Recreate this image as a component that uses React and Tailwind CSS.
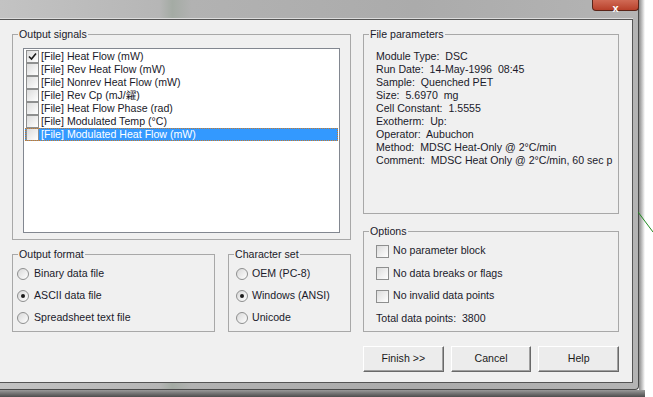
import React from 'react';

const font = { fontFamily: '"Liberation Sans", "Noto Sans CJK SC", sans-serif' };

const signals = [
  { label: '[File] Heat Flow (mW)', checked: true },
  { label: '[File] Rev Heat Flow (mW)' },
  { label: '[File] Nonrev Heat Flow (mW)' },
  { label: '[File] Rev Cp (mJ/糴)' },
  { label: '[File] Heat Flow Phase (rad)' },
  { label: '[File] Modulated Temp (°C)' },
  { label: '[File] Modulated Heat Flow (mW)', selected: true },
];

const params = [
  'Module Type:  DSC',
  'Run Date:  14-May-1996  08:45',
  'Sample:  Quenched PET',
  'Size:  5.6970  mg',
  'Cell Constant:  1.5555',
  'Exotherm:  Up:',
  'Operator:  Aubuchon',
  'Method:  MDSC Heat-Only @ 2°C/min',
  'Comment:  MDSC Heat Only @ 2°C/min, 60 sec p',
];

const CheckBox = ({ checked }) => (
  <span className="flex h-[13px] w-[13px] shrink-0 items-center justify-center border border-[#8e8f8f] bg-gradient-to-br from-[#dcdcdc] to-white">
    {checked && (
      <svg width="9" height="9" viewBox="0 0 9 9">
        <path d="M1 4.5 L3.5 7 L8 1.5" fill="none" stroke="#1a1a1a" strokeWidth="1.6" />
      </svg>
    )}
  </span>
);

const Radio = ({ checked }) => (
  <span className="flex h-[12px] w-[12px] shrink-0 items-center justify-center rounded-full border border-[#8e8f8f] bg-gradient-to-br from-[#d8d8d8] to-white">
    {checked && <span className="h-[4px] w-[4px] rounded-full bg-[#1a1a1a]" />}
  </span>
);

const Group = ({ title, className, children }) => (
  <div className={`relative border border-[#a8a8a8] ${className}`}>
    <span className="absolute -top-[7px] left-[5px] bg-[#f0f0f0] px-[1px] leading-[13px]">{title}</span>
    {children}
  </div>
);

const Button = ({ children }) => (
  <button className="flex h-[26px] w-[81px] items-center justify-center border border-t-white border-l-white border-r-[#696969] border-b-[#696969] bg-[#ececec] shadow-[inset_-1px_-1px_0_#a0a0a0] text-[10.6px] text-[#1a1a1a]">
    {children}
  </button>
);

export default function App() {
  return (
    <div className="relative flex h-[397px] w-[653px] flex-col overflow-hidden bg-white text-[10.6px] text-[#1a1a2a]" style={font}>
      <div className="flex h-[390px]">
        {/* window */}
        <div className="flex w-[639px] flex-col rounded-br-[4px] border-r border-b border-[#4a4a4a] bg-[linear-gradient(to_right,#c3c3c3,#b6b6b6_25%,#a4aba4_27%,#b2b2b2_30%,#ababab_65%,#b4b4b4)] pr-[5px] pb-[6px]">
          {/* caption */}
          <div className="flex h-[19px] justify-end border-b border-[#dcdcdc]">
            <div className="-mr-[6px] flex h-[11px] w-[47px] items-end justify-center rounded-b-[4px] border border-t-0 border-[#5a2418] bg-gradient-to-b from-[#d06a55] to-[#b8402a]">
              <span className="-mb-[3px] text-[11px] font-bold leading-[10px] text-white">x</span>
            </div>
          </div>

          {/* client area */}
          <div className="flex flex-1 border-t border-r border-b border-[#555] bg-[#f0f0f0] pt-[14px] pl-[12px]">
            {/* left column */}
            <div className="flex w-[339px] flex-col">
              <Group title="Output signals" className="h-[206px] pt-[13px] pr-[10px] pb-[6px] pl-[10px]">
                <div className="h-full border border-[#828790] bg-white p-[1px]">
                  {signals.map((s) => (
                    <div
                      key={s.label}
                      className={`flex h-[13px] items-center gap-[2px] pl-[1px] leading-[13px] whitespace-nowrap ${
                        s.selected ? 'bg-[#3399ff] text-white outline outline-1 -outline-offset-1 outline-dotted outline-[#c87a2a]' : ''
                      }`}
                    >
                      <CheckBox checked={s.checked} />
                      <span>{s.label}</span>
                    </div>
                  ))}
                </div>
              </Group>

              <div className="mt-[14px] flex gap-[13px]">
                <Group title="Output format" className="h-[78px] w-[203px] pt-[8px] pl-[4px]">
                  {[
                    ['Binary data file', false],
                    ['ASCII data file', true],
                    ['Spreadsheet text file', false],
                  ].map(([t, c]) => (
                    <div key={t} className="flex h-[22px] items-center gap-[5px]">
                      <Radio checked={c} />
                      <span>{t}</span>
                    </div>
                  ))}
                </Group>
                <Group title="Character set" className="h-[78px] w-[123px] pt-[8px] pl-[7px]">
                  {[
                    ['OEM (PC-8)', false],
                    ['Windows (ANSI)', true],
                    ['Unicode', false],
                  ].map(([t, c]) => (
                    <div key={t} className="flex h-[22px] items-center gap-[4px]">
                      <Radio checked={c} />
                      <span>{t}</span>
                    </div>
                  ))}
                </Group>
              </div>
            </div>

            {/* right column */}
            <div className="ml-[12px] flex w-[256px] flex-col">
              <Group title="File parameters" className="h-[180px] pt-[15px] pl-[12px]">
                {params.map((p) => (
                  <div key={p} className="h-[13px] leading-[13px] whitespace-pre">{p}</div>
                ))}
              </Group>

              <Group title="Options" className="mt-[17px] h-[101px] pt-[8px] pl-[12px]">
                {['No parameter block', 'No data breaks or flags', 'No invalid data points'].map((t) => (
                  <div key={t} className="flex h-[22.5px] items-center gap-[4px]">
                    <CheckBox />
                    <span>{t}</span>
                  </div>
                ))}
                <div className="flex h-[22px] items-center whitespace-pre">Total data points:  3800</div>
              </Group>

              <div className="mt-[14px] flex gap-[7px]">
                <Button>Finish &gt;&gt;</Button>
                <Button>Cancel</Button>
                <Button>Help</Button>
              </div>
            </div>
          </div>
        </div>

        {/* shadow to the right */}
        <div className="w-[6px] bg-gradient-to-r from-[#8a8a8a] to-white" />
        <div className="flex-1" />
      </div>
      <div className="h-[7px] w-[645px] bg-gradient-to-b from-[#9a9a9a] to-[#4e4e4e]" />

      <svg className="absolute left-[638px] top-[210px]" width="15" height="24" viewBox="0 0 15 24">
        <path d="M0 2 L15 22" stroke="#1f8a1f" strokeWidth="1" fill="none" />
      </svg>
    </div>
  );
}
